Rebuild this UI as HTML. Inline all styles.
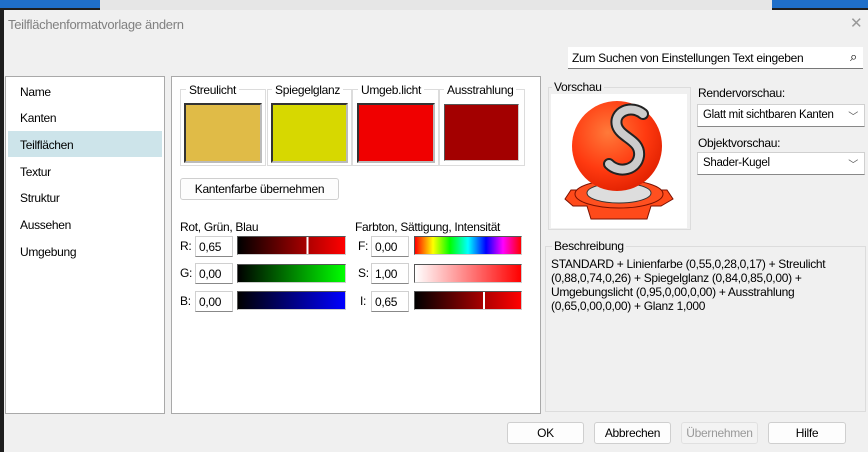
<!DOCTYPE html>
<html><head><meta charset="utf-8"><style>
*{box-sizing:border-box;margin:0;padding:0}
body{width:868px;height:452px;overflow:hidden;background:#1e1e1e;font-family:"Liberation Sans",sans-serif;font-size:12px;letter-spacing:-0.3px;color:#000;position:relative}
.a{position:absolute}
.dlg{left:4px;top:10px;width:864px;height:442px;background:#f0f0f0}
.panel{background:#fff;border:1px solid #a9a9a9}
.grp{border:1px solid #dcdcdc}
.lbl{position:absolute;background:#f0f0f0;padding:0 2px;font-size:12px}
.sw{border:2px solid #333;border-right-color:#bbb;border-bottom-color:#bbb}
.inp{background:#fff;border:1px solid #d0d0d0;border-bottom-color:#888;padding:3px 3px;font-size:12px;height:21px}
.bar{border:1px solid #ccc;border-top-color:#555;border-left-color:#555;height:19px}
.btn{background:#fdfdfd;border:1px solid #cfcfcf;border-radius:3px;text-align:center;line-height:21px;font-size:12px}
.li{position:absolute;left:20px;font-size:12px}
.cb{background:#fff;border:1px solid #d0d0d0;border-bottom-color:#888;padding:4px 5px;height:23px;font-size:11.5px;white-space:nowrap}
.cb span{position:absolute;right:6px;top:3px;color:#555;font-size:10px}
</style></head><body>
<div class="a" style="left:0;top:0;width:100px;height:8px;background:#1f6fc9"></div>
<div class="a" style="left:772px;top:0;width:96px;height:8px;background:#1f6fc9"></div>
<div class="a" style="left:100px;top:0;width:672px;height:10px;background:#e6e6e6"></div>
<div class="a dlg"></div>
<div class="a" style="left:8px;top:17px;color:#808080;font-size:13px">Teilflächenformatvorlage ändern</div>
<div class="a" style="left:850px;top:14px;color:#999;font-size:15px">✕</div>
<div class="a" style="left:568px;top:47px;width:295px;height:22px;background:#fff;border-bottom:1px solid #777;padding:4px 4px;font-size:12px">Zum Suchen von Einstellungen Text eingeben<span style="position:absolute;right:6px;top:2px;font-size:13px">⌕</span></div>

<div class="a panel" style="left:5px;top:76px;width:160px;height:338px"></div>
<div class="a" style="left:8px;top:131px;width:154px;height:26px;background:#cde4ea"></div>
<div class="li" style="top:85px">Name</div>
<div class="li" style="top:111px">Kanten</div>
<div class="li" style="top:138px">Teilflächen</div>
<div class="li" style="top:165px">Textur</div>
<div class="li" style="top:191px">Struktur</div>
<div class="li" style="top:218px">Aussehen</div>
<div class="li" style="top:245px">Umgebung</div>

<div class="a panel" style="left:171px;top:76px;width:370px;height:338px"></div>
<div class="a grp" style="left:180px;top:89px;width:86px;height:77px;background:#fff"></div>
<div class="a grp" style="left:267px;top:89px;width:85px;height:77px;background:#fff"></div>
<div class="a grp" style="left:352px;top:89px;width:87px;height:77px;background:#fff"></div>
<div class="a grp" style="left:439px;top:89px;width:86px;height:77px;background:#fff"></div>
<div class="a" style="left:186px;top:83px;background:#fff;padding:0 3px">Streulicht</div>
<div class="a" style="left:272px;top:83px;background:#fff;padding:0 3px">Spiegelglanz</div>
<div class="a" style="left:358px;top:83px;background:#fff;padding:0 3px">Umgeb.licht</div>
<div class="a" style="left:444px;top:83px;background:#fff;padding:0 3px">Ausstrahlung</div>
<div class="a sw" style="left:184px;top:103px;width:78px;height:60px;background:#e0bb47"></div>
<div class="a sw" style="left:271px;top:103px;width:77px;height:60px;background:#d7d800"></div>
<div class="a sw" style="left:357px;top:103px;width:78px;height:60px;background:#f00000"></div>
<div class="a" style="left:444px;top:104px;width:75px;height:57px;background:#a30000;border:1px solid #555;border-right-color:#ccc;border-bottom-color:#ccc"></div>
<div class="a btn" style="left:180px;top:178px;width:159px;height:22px">Kantenfarbe übernehmen</div>

<div class="a" style="left:180px;top:220px">Rot, Grün, Blau</div>
<div class="a" style="left:355px;top:220px">Farbton, Sättigung, Intensität</div>
<div class="a" style="left:180px;top:239px">R:</div>
<div class="a" style="left:180px;top:266px">G:</div>
<div class="a" style="left:180px;top:294px">B:</div>
<div class="a inp" style="left:195px;top:236px;width:38px">0,65</div>
<div class="a inp" style="left:195px;top:263px;width:38px">0,00</div>
<div class="a inp" style="left:195px;top:291px;width:38px">0,00</div>
<div class="a bar" style="left:237px;top:236px;width:109px;background:linear-gradient(90deg,#000,#a80000 64%,#fff 64%,#fff 66%,#b00000 66%,#f00)"></div>
<div class="a bar" style="left:237px;top:264px;width:109px;background:linear-gradient(90deg,#000,#00ff00)"></div>
<div class="a bar" style="left:237px;top:291px;width:109px;background:linear-gradient(90deg,#000,#0000ff)"></div>
<div class="a" style="left:358px;top:239px">F:</div>
<div class="a" style="left:358px;top:266px">S:</div>
<div class="a" style="left:360px;top:294px">I:</div>
<div class="a inp" style="left:371px;top:236px;width:38px">0,00</div>
<div class="a inp" style="left:371px;top:263px;width:38px">1,00</div>
<div class="a inp" style="left:371px;top:291px;width:38px">0,65</div>
<div class="a bar" style="left:414px;top:236px;width:108px;background:linear-gradient(90deg,#f00,#ff0 17%,#0f0 33%,#0ff 50%,#00f 67%,#f0f 83%,#f00)"></div>
<div class="a bar" style="left:414px;top:264px;width:108px;background:linear-gradient(90deg,#fff,#ff0000)"></div>
<div class="a bar" style="left:414px;top:291px;width:108px;background:linear-gradient(90deg,#000,#a80000 64%,#fff 64%,#fff 66%,#b00000 66%,#f00)"></div>

<div class="a grp" style="left:548px;top:87px;width:143px;height:143px"></div>
<div class="lbl" style="left:552px;top:80px">Vorschau</div>
<div class="a" style="left:551px;top:94px;width:136px;height:134px;background:#fff"></div>
<svg class="a" style="left:551px;top:94px" width="136" height="134" viewBox="0 0 136 134">
<defs><radialGradient id="g" cx="0.4" cy="0.35" r="0.7"><stop offset="0" stop-color="#ff7a3a"/><stop offset="0.6" stop-color="#ff3a10"/><stop offset="1" stop-color="#e02000"/></radialGradient></defs>
<path d="M14 105 L20 96 L116 96 L122 105 L110 112 L100 112 L96 125 L40 125 L36 112 L22 112 Z" fill="#ff4a1a" stroke="#7a1000"/>
<ellipse cx="68" cy="100" rx="44" ry="14" fill="#ff5020" stroke="#7a1000"/>
<ellipse cx="68" cy="99" rx="32" ry="10" fill="#ddd" stroke="#333"/>
<circle cx="66" cy="52" r="45" fill="url(#g)"/>
<path d="M92 20 C80 10,62 18,66 32 C70 44,90 46,88 62 C86 76,68 80,58 70" fill="none" stroke="#222" stroke-width="12" stroke-linecap="round"/>
<path d="M92 20 C80 10,62 18,66 32 C70 44,90 46,88 62 C86 76,68 80,58 70" fill="none" stroke="#ccc" stroke-width="8" stroke-linecap="round"/>
</svg>
<div class="a" style="left:698px;top:86px">Rendervorschau:</div>
<div class="a cb" style="left:697px;top:104px;width:168px">Glatt mit sichtbaren Kanten<span>﹀</span></div>
<div class="a" style="left:698px;top:136px">Objektvorschau:</div>
<div class="a cb" style="left:697px;top:152px;width:168px">Shader-Kugel<span>﹀</span></div>

<div class="a grp" style="left:545px;top:246px;width:321px;height:166px"></div>
<div class="lbl" style="left:552px;top:239px">Beschreibung</div>
<div class="a" style="left:551px;top:257px;width:310px;line-height:14px;font-size:12px">STANDARD + Linienfarbe (0,55,0,28,0,17) + Streulicht (0,88,0,74,0,26) + Spiegelglanz (0,84,0,85,0,00) + Umgebungslicht (0,95,0,00,0,00) + Ausstrahlung (0,65,0,00,0,00) + Glanz 1,000</div>

<div class="a btn" style="left:507px;top:422px;width:77px;height:22px">OK</div>
<div class="a btn" style="left:594px;top:422px;width:77px;height:22px">Abbrechen</div>
<div class="a btn" style="left:681px;top:422px;width:77px;height:22px;color:#999;background:#f3f3f3;border-color:#e0e0e0">Übernehmen</div>
<div class="a btn" style="left:768px;top:422px;width:78px;height:22px">Hilfe</div>
</body></html>
